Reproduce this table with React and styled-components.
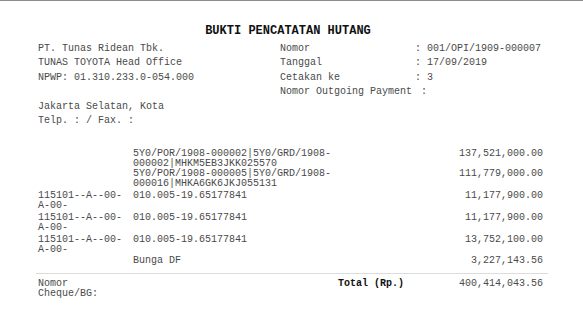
import React from 'react';
import styled, { createGlobalStyle } from 'styled-components';

const GlobalStyle = createGlobalStyle`
  html, body {
    margin: 0;
    padding: 0;
    background: #ffffff;
  }
`;

const header = {
  left: ['PT. Tunas Ridean Tbk.', 'TUNAS TOYOTA Head Office', 'NPWP: 01.310.233.0-054.000', '', 'Jakarta Selatan, Kota', 'Telp. : / Fax. :'],
  right: [
    ['Nomor', ': 001/OPI/1909-000007'],
    ['Tanggal', ': 17/09/2019'],
    ['Cetakan ke', ': 3'],
    ['Nomor Outgoing Payment', ' :'],
  ],
};

const items = [
  { account: '', desc: '5Y0/POR/1908-000002|5Y0/GRD/1908-000002|MHKM5EB3JKK025570', amount: '137,521,000.00', gap: 0 },
  { account: '', desc: '5Y0/POR/1908-000005|5Y0/GRD/1908-000016|MHKA6GK6JKJ055131', amount: '111,779,000.00', gap: 0 },
  { account: '115101--A--00-A-00-', desc: '010.005-19.65177841', amount: '11,177,900.00', gap: 2.5 },
  { account: '115101--A--00-A-00-', desc: '010.005-19.65177841', amount: '11,177,900.00', gap: 2.5 },
  { account: '115101--A--00-A-00-', desc: '010.005-19.65177841', amount: '13,752,100.00', gap: 2.5 },
  { account: '', desc: 'Bunga DF', amount: '3,227,143.56', gap: 1 },
];

function App() {
  return (
    <>
      <GlobalStyle />
      <StyledPage>
        <StyledTitle>BUKTI PENCATATAN HUTANG</StyledTitle>
        <StyledHeader>
          <StyledInfoList>
            {header.left.map((line, i) => (
              <StyledInfoLine key={i}>{line || '\u00a0'}</StyledInfoLine>
            ))}
          </StyledInfoList>
          <StyledMetaList>
            {header.right.map(([label, value]) => (
              <React.Fragment key={label}>
                <StyledInfoLine>{label}</StyledInfoLine>
                <StyledInfoLine>{value}</StyledInfoLine>
              </React.Fragment>
            ))}
          </StyledMetaList>
        </StyledHeader>
        <StyledItems>
          {items.map((item, i) => (
            <StyledItemRow key={i} $gap={item.gap}>
              <StyledCell>{item.account}</StyledCell>
              <StyledCell>{item.desc}</StyledCell>
              <StyledCell />
              <StyledAmount>{item.amount}</StyledAmount>
            </StyledItemRow>
          ))}
        </StyledItems>
        <StyledFooter>
          <StyledCell>Nomor Cheque/BG:</StyledCell>
          <StyledCell />
          <StyledTotalLabel>Total (Rp.)</StyledTotalLabel>
          <StyledAmount>400,414,043.56</StyledAmount>
        </StyledFooter>
      </StyledPage>
    </>
  );
}

export default App;

const StyledPage = styled.div`
  width: 583px;
  height: 319px;
  box-sizing: border-box;
  border-top: 1px solid #8c8c8c;
  padding: 23px 35px 0 36px;
  font-family: 'Liberation Mono', 'Courier New', monospace;
  font-size: 10px;
  color: #4a4a4a;
  overflow: hidden;
`;

const StyledTitle = styled.div`
  text-align: center;
  font-size: 12px;
  line-height: 14px;
  font-weight: bold;
  color: #111111;
  padding-right: 8px;
`;

const StyledHeader = styled.div`
  display: grid;
  grid-template-columns: 244px 1fr;
  margin-top: 4px;
`;

const StyledInfoList = styled.div`
  display: flex;
  flex-direction: column;
  padding-left: 2px;
`;

const StyledMetaList = styled.div`
  display: grid;
  grid-template-columns: 135px 1fr;
  align-content: start;
`;

const StyledInfoLine = styled.div`
  line-height: 14.4px;
  white-space: pre;
`;

const StyledItems = styled.div`
  display: flex;
  flex-direction: column;
  margin-top: 21px;
`;

const StyledItemRow = styled.div`
  display: grid;
  grid-template-columns: 95px 205px 1fr 120px;
  padding: ${(p) => p.$gap}px 5px 0 2px;
  line-height: 9.8px;
`;

const StyledCell = styled.div`
  word-break: normal;
  overflow-wrap: anywhere;
  padding-right: 4px;
`;

const StyledAmount = styled.div`
  text-align: right;
`;

const StyledFooter = styled.div`
  display: grid;
  grid-template-columns: 95px 205px 1fr 120px;
  padding: 5px 5px 0 2px;
  margin-top: 7px;
  border-top: 1px solid #dcdcdc;
  line-height: 10px;
`;

const StyledTotalLabel = styled.div`
  font-weight: bold;
  color: #111111;
`;
